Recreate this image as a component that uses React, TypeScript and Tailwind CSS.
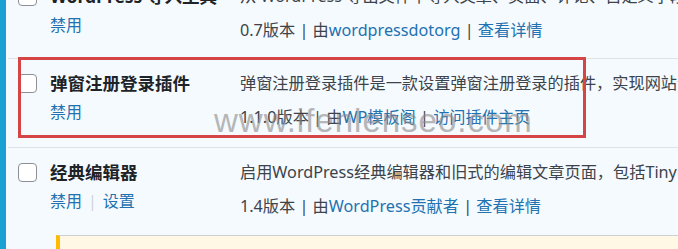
const linkCls = "text-[#2271b1]";

function Checkbox() {
  return (
    <div className="mt-[15px] h-[19px] w-[19px] flex-shrink-0 rounded-[4px] border border-[#8c8f94] bg-white" />
  );
}

interface RowProps {
  title: string;
  actions: string[];
  desc: string;
  version: string;
  author: string;
  extra: string;
  border?: boolean;
  className?: string;
}

function PluginRow({ title, actions, desc, version, author, extra, border = true, className = "" }: RowProps) {
  return (
    <div className={`flex ${border ? "border-t border-[#dde3e8]" : ""} ${className}`}>
      <div className="flex w-[232px] flex-shrink-0 gap-[13px] pl-[10px]">
        <Checkbox />
        <div className="pt-[12px]">
          <div className="text-[17.5px] font-bold leading-[24px] text-[#1d2327]">{title}</div>
          <div className="mt-[5px] flex items-center text-[16px] leading-[24px]">
            {actions.map((a, i) => (
              <span key={a} className="flex items-center">
                {i > 0 && <span className="mx-[6px] text-[#d0d2d5]">|</span>}
                <span className={linkCls}>{a}</span>
              </span>
            ))}
          </div>
        </div>
      </div>
      <div className="min-w-0 flex-1 whitespace-nowrap pt-[12px] text-[16.2px] leading-[24px] text-[#3c434a]">
        <div className="overflow-hidden">{desc}</div>
        <div className="mt-[10px]">
          {version}版本 | 由<span className={linkCls}>{author}</span> | <span className={linkCls}>{extra}</span>
        </div>
      </div>
    </div>
  );
}

export default function App() {
  return (
    <div
      className="relative h-[249px] w-[678px] overflow-hidden bg-[#f5fafe]"
      style={{ fontFamily: '"Noto Sans", "Noto Sans CJK SC", sans-serif' }}
    >
      <div className="absolute left-0 top-0 h-full w-[6px] bg-[#1ba0d3]" />
      <div className="ml-[8px]">
        <PluginRow
          border={false}
          className="-mt-[28px] h-[86px]"
          title="WordPress 导入工具"
          actions={["禁用"]}
          desc="从 WordPress 导出文件中导入文章、页面、评论、自定义字段、分类和标签。"
          version="0.7"
          author="wordpressdotorg"
          extra="查看详情"
        />
        <PluginRow
          className="h-[89px]"
          title="弹窗注册登录插件"
          actions={["禁用"]}
          desc="弹窗注册登录插件是一款设置弹窗注册登录的插件，实现网站注册登录。"
          version="1.1.0"
          author="WP模板阁"
          extra="访问插件主页"
        />
        <PluginRow
          className="h-[88px]"
          title="经典编辑器"
          actions={["禁用", "设置"]}
          desc="启用WordPress经典编辑器和旧式的编辑文章页面，包括TinyMCE、Meta Boxes等。"
          version="1.4"
          author="WordPress贡献者"
          extra="查看详情"
        />
        <div className="ml-[48px] h-[40px] border-l-4 border-t border-l-[#ffb900] border-t-[#ccd0d4] bg-[#fff8e5]" />
      </div>

      <div className="pointer-events-none absolute left-[18px] top-[57px] h-[81px] w-[568px] border-[3px] border-[#d64545]" />
      <div
        className="pointer-events-none absolute left-[214px] top-[104px] text-[33px] leading-none tracking-[1px] text-[#8a8a8a] opacity-60"
        style={{ fontFamily: '"Liberation Sans", sans-serif' }}
      >
        www.ifenlenseo.com
      </div>
    </div>
  );
}
